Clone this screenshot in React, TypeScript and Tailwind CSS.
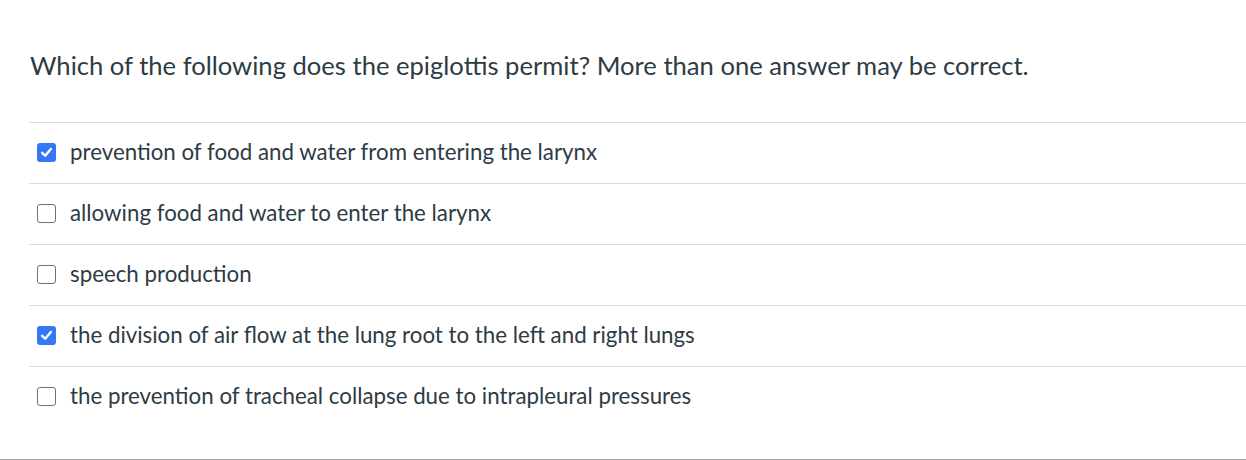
import React from "react";

const answers = [
  { text: "prevention of food and water from entering the larynx", checked: true },
  { text: "allowing food and water to enter the larynx", checked: false },
  { text: "speech production", checked: false },
  { text: "the division of air flow at the lung root to the left and right lungs", checked: true },
  { text: "the prevention of tracheal collapse due to intrapleural pressures", checked: false },
];

function Box({ checked }: { checked: boolean }) {
  if (checked) {
    return (
      <span className="flex h-[19px] w-[19px] items-center justify-center rounded-[3px] bg-[#3478f6]">
        <svg width="13" height="13" viewBox="0 0 12 12" fill="none">
          <path d="M2 6.3 L4.8 9 L10 2.8" stroke="white" strokeWidth="2.2" strokeLinecap="round" strokeLinejoin="round" />
        </svg>
      </span>
    );
  }
  return <span className="block h-[19px] w-[19px] rounded-[3px] border-[1.5px] border-[#707070] bg-white" />;
}

export default function App() {
  return (
    <div className="h-[460px] w-[1246px] bg-white text-[#2d3b45]" style={{ fontFamily: "Lato, 'Open Sans', sans-serif" }}>
      <div className="flex h-[459px] flex-col pl-[29px]">
        <div className="flex h-[122px] items-center pl-px pt-[10px] text-[25.6px] leading-none">
          Which of the following does the epiglottis permit? More than one answer may be correct.
        </div>
        {answers.map((a, i) => (
          <div key={i} className="flex h-[61px] items-center border-t border-[#dcdcdc] pl-[8px] pb-[2px]">
            <Box checked={a.checked} />
            <span className="ml-[14px] text-[22.3px] leading-none">{a.text}</span>
          </div>
        ))}
      </div>
      <div className="h-px w-full bg-[#a5a5a5]" />
    </div>
  );
}
